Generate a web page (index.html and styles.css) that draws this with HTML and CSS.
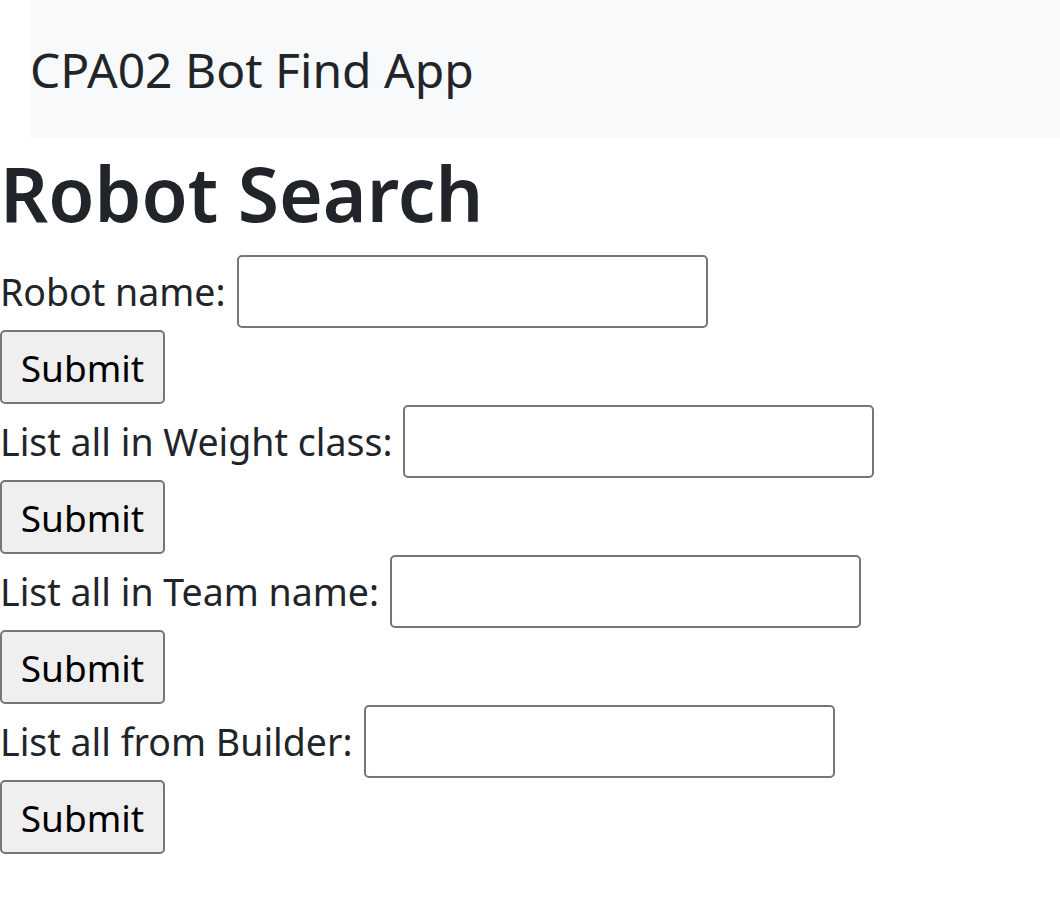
FILE: index.html
```html
<!DOCTYPE html>
<html lang="en">
<head>
<meta charset="utf-8">
<title>CPA02 Bot Find App</title>
<link rel="stylesheet" href="styles.css">
</head>
<body>
<nav class="navbar">
  <span class="brand">CPA02 Bot Find App</span>
</nav>
<h1 class="title">Robot Search</h1>
<form class="search">
  <div class="row"><label>Robot name:</label><input type="text"></div>
  <div class="row"><button type="button">Submit</button></div>
</form>
<form class="search">
  <div class="row"><label>List all in Weight class:</label><input type="text"></div>
  <div class="row"><button type="button">Submit</button></div>
</form>
<form class="search">
  <div class="row"><label>List all in Team name:</label><input type="text"></div>
  <div class="row"><button type="button">Submit</button></div>
</form>
<form class="search">
  <div class="row"><label>List all from Builder:</label><input type="text"></div>
  <div class="row"><button type="button">Submit</button></div>
</form>
</body>
</html>
```
FILE: styles.css
```css
html, body {
  margin: 0;
  padding: 0;
  background: #fff;
}
body {
  font-family: "Noto Sans", "Open Sans", sans-serif;
  color: #212529;
  font-size: 37.5px;
}
.navbar {
  margin-left: 30px;
  height: 137px;
  background: #f8f9fa;
  display: flex;
  align-items: center;
}
.brand {
  font-size: 48px;
  font-weight: 400;
  color: #212529;
  padding-top: 2px;
}
.title {
  margin: 0;
  height: 118px;
  font-size: 75px;
  font-weight: 600;
  line-height: 112px;
  color: #212529;
}
.search {
  margin: 0;
}
.row {
  height: 75px;
  display: flex;
  align-items: flex-start;
}
.row label {
  height: 73px;
  display: flex;
  align-items: center;
  margin-right: 11px;
}
.row input {
  width: 471px;
  height: 73px;
  box-sizing: border-box;
  border: 2px solid #767676;
  border-radius: 5px;
  background: #fff;
  margin: 0;
  padding: 0 4px;
  font-size: 36px;
}
.row button {
  width: 165px;
  height: 74px;
  box-sizing: border-box;
  border: 2px solid #767676;
  border-radius: 5px;
  background: #efefef;
  color: #000;
  font-family: inherit;
  font-size: 37px;
  margin: 0;
  padding: 0;
}
```
